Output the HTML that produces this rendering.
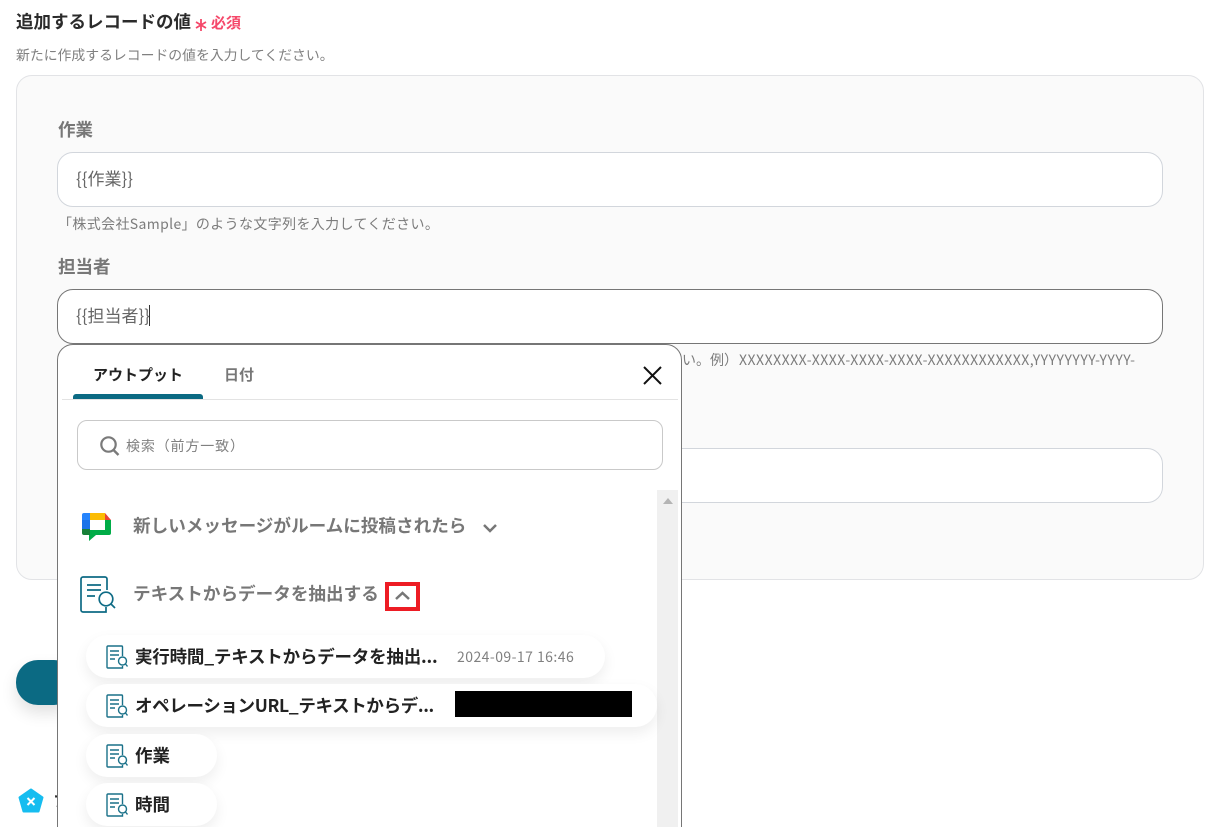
<!DOCTYPE html>
<html lang="ja"><head><meta charset="utf-8"><style>
html,body{margin:0;padding:0;width:1215px;height:827px;overflow:hidden;background:#fff}
body{position:relative;font-family:"Noto Sans CJK JP","Liberation Sans",sans-serif;color:#2b2b2b}
.a{position:absolute;white-space:nowrap;line-height:20px}
.box{position:absolute;box-sizing:border-box;background:#fff;border:1px solid #d2d6dc;border-radius:16px}
.lab{font-size:17.5px;font-weight:700;color:#777}
.hint{font-size:14px;color:#7c7c7c}
.val{font-size:17px;color:#666}
.pill{position:absolute;left:86px;height:43px;background:#fff;border-radius:22px;box-shadow:0 6px 14px rgba(0,0,0,.07)}
.pt{position:absolute;left:135px;font-size:17.5px;font-weight:700;color:#222;white-space:nowrap;line-height:20px}
.ic{position:absolute;left:106px}
</style></head><body>
<div class="a" style="left:16px;top:12px;font-size:17.5px;font-weight:700;color:#2b2b2b">追加するレコードの値</div>
<svg class="a" style="left:195px;top:18px" width="12" height="14" viewBox="0 0 12 14"><path d="M6 1v12M1 4l10 6M11 4L1 10" stroke="#f5486a" stroke-width="1.8" fill="none"/></svg>
<div class="a" style="left:211px;top:13px;font-size:15px;font-weight:700;color:#f5486a">必須</div>
<div class="a" style="left:16px;top:44px;font-size:13.85px;color:#808080">新たに作成するレコードの値を入力してください。</div>

<div class="box" style="left:16px;top:75px;width:1188px;height:505px;background:#fafafa;border-color:#e2e3e6"></div>
<div class="a lab" style="left:58px;top:120px">作業</div>
<div class="box" style="left:57px;top:152px;width:1106px;height:55px"></div>
<div class="a val" style="left:76px;top:168px">{{作業}}</div>
<div class="a hint" style="left:58px;top:214px;letter-spacing:.36px">「株式会社Sample」のような文字列を入力してください。</div>
<div class="a lab" style="left:58px;top:257px">担当者</div>
<div class="box" style="left:57px;top:289px;width:1106px;height:55px;border-color:#767676"></div>
<div class="a val" style="left:76px;top:305px">{{担当者}}</div>
<div class="a" style="left:149px;top:305px;width:1px;height:21px;background:#333"></div>
<div class="a hint" style="left:682px;top:350px">い。例）</div>
<div class="a hint" style="left:739px;top:350px;letter-spacing:.5px">XXXXXXXX-XXXX-XXXX-XXXX-XXXXXXXXXXXX,YYYYYYYY-YYYY-</div>
<div class="box" style="left:57px;top:448px;width:1106px;height:55px"></div>

<div style="position:absolute;left:16px;top:660px;width:60px;height:45px;background:#0b6a83;border-radius:22px;box-shadow:0 8px 16px rgba(0,0,0,.12)"></div>
<svg class="a" style="left:18px;top:788px" width="26" height="26" viewBox="0 0 26 26"><path d="M13 1.500L24.500 9.500 20.500 23.500H5.500L1.500 9.500Z" fill="#16bdf0" stroke="#16bdf0" stroke-width="2" stroke-linejoin="round"/><path d="M9.500 10l7 7M16.500 10l-7 7" stroke="#fff" stroke-width="2"/></svg>
<div class="a" style="left:53px;top:790px;font-size:16px;font-weight:700">フ</div>

<!-- popup -->
<div style="position:absolute;left:57px;top:344px;width:625px;height:500px;box-sizing:border-box;background:#fff;border:1px solid #767676;border-radius:16px"></div>
<div class="a" style="left:93px;top:365px;font-size:15px;font-weight:700;color:#222">アウトプット</div>
<div class="a" style="left:224px;top:365px;font-size:15px;font-weight:700;color:#777">日付</div>
<div style="position:absolute;left:62px;top:399px;width:616px;height:1px;background:#e3e3e3"></div>
<div style="position:absolute;left:73px;top:394px;width:130px;height:5px;background:#0b6a83;border-radius:3px 3px 0 0"></div>
<svg class="a" style="left:642px;top:365px" width="21" height="21" viewBox="0 0 21 21"><path d="M2 2l17 17M19 2L2 19" stroke="#111" stroke-width="2" fill="none"/></svg>
<div class="box" style="left:77px;top:420px;width:586px;height:50px;border-color:#c9c9c9;border-radius:10px"></div>
<svg class="a" style="left:99px;top:435px" width="22" height="22" viewBox="0 0 22 22"><circle cx="9.500" cy="9.500" r="7.200" fill="none" stroke="#7a7a7a" stroke-width="2.200"/><path d="M14.500 15l5 5" stroke="#7a7a7a" stroke-width="2.400"/></svg>
<div class="a" style="left:126px;top:436px;font-size:14px;letter-spacing:.85px;color:#808080">検索（前方一致）</div>

<div style="position:absolute;left:657px;top:490px;width:21px;height:337px;background:#f0f0f0"></div>
<svg class="a" style="left:662px;top:497px" width="12" height="8" viewBox="0 0 12 8"><path d="M6 1l5 6H1z" fill="#b4b4b4"/></svg>

<!-- chat icon: origin 82,512 -->
<svg class="a" style="left:82px;top:512px" width="30" height="30" viewBox="0 0 30 30">
<path d="M2 1H8V8H0V3a2 2 0 0 1 2-2z" fill="#2684fc"/><path d="M8 1H23V8H8z" fill="#fbbc04"/><path d="M23 1l6 7H23z" fill="#ea4335"/>
<path d="M0 8H8V17H0z" fill="#1a73e8"/><path d="M0 17H8V23H2a2 2 0 0 1-2-2z" fill="#188038"/>
<path d="M23 8H29V21a2 2 0 0 1-2 2H14L7 29V23H8V18H23z" fill="#00ac47"/></svg>
<div class="a" style="left:133px;top:516px;font-size:17.6px;font-weight:700;color:#777">新しいメッセージがルームに投稿されたら</div>
<svg class="a" style="left:482px;top:523px" width="16" height="11" viewBox="0 0 16 11"><path d="M2 2l6 6 6-6" stroke="#777" stroke-width="2.500" fill="none"/></svg>

<svg class="a" style="left:80px;top:576px" width="36" height="37" viewBox="0 0 36 37" fill="none" stroke="#0e6b85" stroke-width="1.700">
<path d="M27 14V3a2 2 0 0 0-2-2H3a2 2 0 0 0-2 2v31a2 2 0 0 0 2 2h23V31"/><path d="M7 9h14M7 14h14M7 20h8"/><circle cx="26" cy="23" r="6.800" fill="#fff"/><path d="M31 28l4 4"/></svg>
<div class="a" style="left:133px;top:584px;font-size:17.6px;font-weight:700;color:#777">テキストからデータを抽出する</div>
<div style="position:absolute;left:385px;top:582px;width:35px;height:29px;box-sizing:border-box;border:4px solid #ed1c24"></div>
<svg class="a" style="left:394px;top:590px" width="17" height="12" viewBox="0 0 17 12"><path d="M2 9l6.500-6 6.500 6" stroke="#777" stroke-width="2.500" fill="none"/></svg>

<div class="pill" style="top:635px;width:519px"></div>
<div class="pill" style="top:684px;width:571px"></div>
<div class="pill" style="top:734px;width:131px"></div>
<div class="pill" style="top:783px;width:131px"></div>

<svg width="0" height="0" style="position:absolute"><defs><symbol id="d" viewBox="0 0 22 24"><g fill="none" stroke="#1a7189" stroke-width="1.400"><path d="M16.500 11V2a1 1 0 0 0-1-1H2a1 1 0 0 0-1 1v20a1 1 0 0 0 1 1h14.500v-2" /><path d="M4 6h9M4 10h9M4 14h5"/><circle cx="16.500" cy="16" r="4" fill="#fff"/><path d="M19.500 19l2 2.500"/></g></symbol></defs></svg>
<svg class="ic" style="top:645px" width="22" height="24"><use href="#d"/></svg>
<svg class="ic" style="top:694px" width="22" height="24"><use href="#d"/></svg>
<svg class="ic" style="top:744px" width="22" height="24"><use href="#d"/></svg>
<svg class="ic" style="top:793px" width="22" height="24"><use href="#d"/></svg>

<div class="pt" style="top:647px;letter-spacing:-.2px">実行時間_テキストからデータを抽出...</div>
<div class="a" style="left:457px;top:647px;font-size:14px;letter-spacing:.45px;color:#808080">2024-09-17 16:46</div>
<div class="pt" style="top:696px;letter-spacing:-.35px">オペレーションURL_テキストからデ...</div>
<div style="position:absolute;left:455px;top:691px;width:177px;height:26px;background:#000"></div>
<div class="pt" style="top:746px">作業</div>
<div class="pt" style="top:795px">時間</div>
</body></html>
